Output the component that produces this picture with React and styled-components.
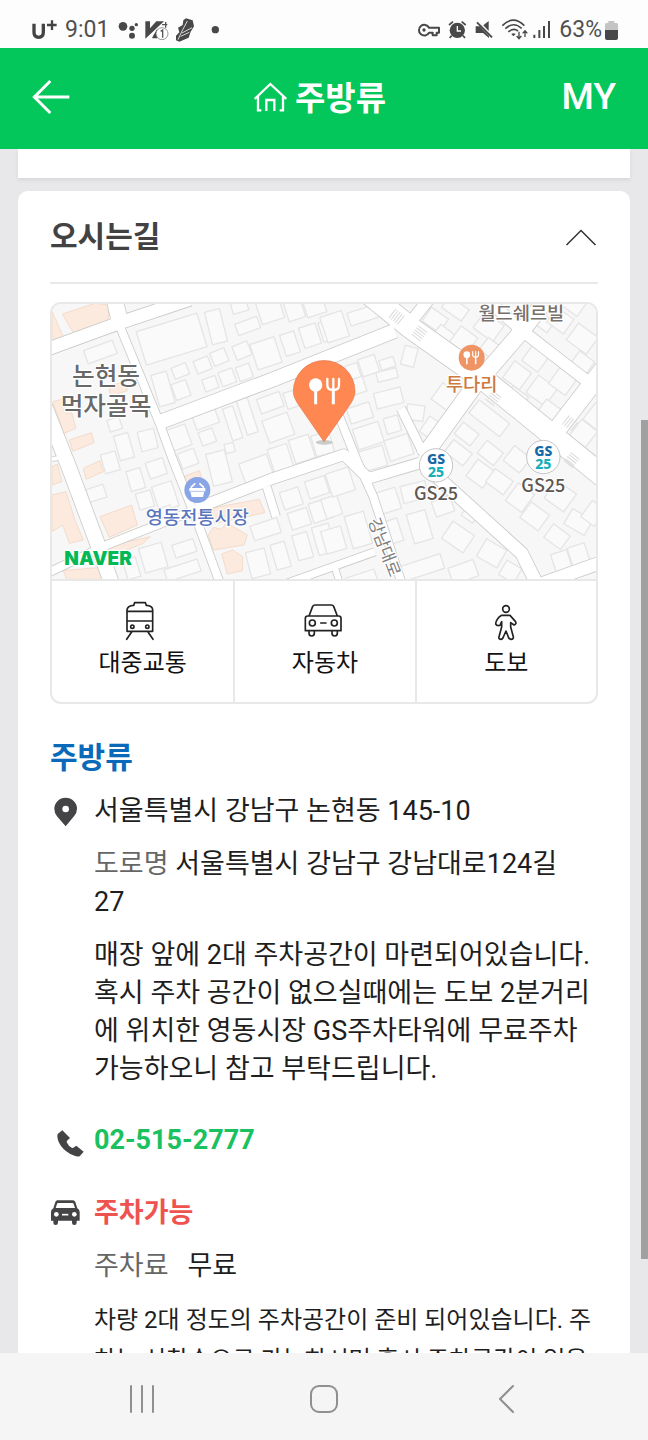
import React from "react";
import styled, { createGlobalStyle } from "styled-components";

const GlobalStyle = createGlobalStyle`
  *, *::before, *::after { box-sizing: border-box; }
  body {
    margin: 0;
    background: #e8e8ea;
    color: #1e1e1e;
    font-family: Roboto, "Noto Sans CJK KR", sans-serif;
  }
  button {
    padding: 0;
    border: 0;
    background: none;
    color: inherit;
    font: inherit;
    cursor: pointer;
  }
  a { color: inherit; text-decoration: none; }
  h1, h2, h3, p, dl, dt, dd { margin: 0; font-size: inherit; font-weight: inherit; }
  svg { display: block; flex: none; }
`;

const Screen = styled.div`
  position: relative;
  display: flex;
  flex-direction: column;
  height: 100vh;
  overflow: hidden;
`;

const StatusBar = styled.div`
  display: flex;
  flex: none;
  align-items: center;
  justify-content: space-between;
  height: 48px;
  padding: 12px 30px 0 32px;
  background: #fdfdfd;
  color: #505050;
  font-size: 23px;
  line-height: 36px;
`;

const StatusGroup = styled.div`
  display: flex;
  align-items: center;
  gap: ${(p) => p.$gap}px;
`;

const TopBar = styled.header`
  display: grid;
  grid-template-columns: 1fr auto 1fr;
  flex: none;
  align-items: center;
  height: 101px;
  padding: 0 32px 4px;
  background: #03c75a;
  color: #fff;
`;

const BackButton = styled.button`
  justify-self: start;
`;

const ShopTitle = styled.h1`
  display: flex;
  align-items: center;
  gap: 8px;
  padding: 4px 8px 0 0;
  font-size: 33px;
  font-weight: 700;
  line-height: 48px;
`;

const MyLink = styled.a`
  justify-self: end;
  font-size: 37px;
  font-weight: 500;
  line-height: 48px;
`;

const Content = styled.main`
  display: flex;
  flex: 1;
  flex-direction: column;
  gap: 13px;
  min-height: 0;
  padding: 0 18px;
  overflow: hidden;
`;

const PreviousCard = styled.div`
  flex: none;
  height: 29px;
  background: #fff;
  box-shadow: 0 2px 4px rgba(0, 0, 0, 0.08);
`;

const Card = styled.section`
  flex: none;
  padding: 0 32px 40px;
  border-radius: 10px 10px 0 0;
  background: #fff;
`;

const CardHeader = styled.button`
  display: flex;
  align-items: center;
  justify-content: space-between;
  width: 100%;
  height: 93px;
  margin-bottom: 18px;
  padding-right: 1px;
  border-bottom: 2px solid #e9e9e9;
  color: #424242;
  font-size: 30px;
  font-weight: 700;
  line-height: 44px;
`;

const MapBox = styled.div`
  overflow: hidden;
  border: 2px solid #e8e8e9;
  border-radius: 11px;
`;

const MapDrawing = styled.svg`
  width: 100%;
  height: auto;
  background: #f7f7f7;
  font-family: Roboto, "Noto Sans CJK KR", sans-serif;
`;

const RouteTabs = styled.div`
  display: grid;
  grid-template-columns: repeat(3, 1fr);
  border-top: 2px solid #e8e8e9;
`;

const RouteTab = styled.button`
  display: flex;
  flex-direction: column;
  align-items: center;
  gap: 4px;
  height: 121px;
  padding-top: 20px;
  color: #111;
  font-size: 24px;
  line-height: 36px;

  & + & { border-left: 2px solid #e8e8e9; }
`;

const ShopName = styled.h3`
  margin: 32px 0 12px;
  color: #0a69b8;
  font-size: 30px;
  font-weight: 700;
  line-height: 44px;
`;

const InfoList = styled.div`
  display: flex;
  flex-direction: column;
  gap: 33px;
`;

const InfoRow = styled.div`
  display: grid;
  grid-template-columns: 44px 1fr;
  padding-right: 5px;
  font-size: 27px;
  line-height: 38px;
`;

const InfoIcon = styled.div`
  display: flex;
  align-items: center;
  justify-content: ${(p) => p.$align || "flex-start"};
  width: 32px;
  height: 40px;
`;

const InfoBody = styled.div`
  display: flex;
  flex-direction: column;
  gap: 15px;
  min-width: 0;
`;

const Muted = styled.span`
  color: #666;
`;

const Fee = styled.p`
  display: flex;
  gap: 19px;
`;

const SmallText = styled.p`
  font-size: 24px;
  line-height: 40px;
`;

const Strong = styled.strong`
  color: ${(p) => p.$color};
  font-weight: 700;
`;

const ScrollThumb = styled.div`
  position: absolute;
  top: 420px;
  right: 0;
  width: 7px;
  height: 839px;
  background: #a0a0a1;
`;

const NavBar = styled.nav`
  display: grid;
  grid-template-columns: repeat(3, 182px);
  flex: none;
  align-items: center;
  justify-content: center;
  justify-items: center;
  height: 87px;
  padding-top: 4px;
  background: #f5f5f5;
`;

const RoundSvg = styled.svg`
  fill: none;
  stroke: ${(p) => p.$color};
  stroke-width: ${(p) => p.$stroke || 2};
  stroke-linecap: round;
  stroke-linejoin: round;
`;

/* ---------- map data ---------- */

const roads = [
  { w: 38, d: "M10 182L240 98L450 28" },
  { w: 48, d: "M222 20L240 98" },
  { w: 24, d: "M238 105L357 395L395 500L470 690L540 880" },
  { w: 42, d: "M357 397L700 268L1065 122" },
  { w: 64, d: "M985 10L1110 112L1340 275L1690 560" },
  { w: 34, d: "M1180 10L1100 112" },
  { w: 48, d: "M1150 500L1300 292L1440 130L1510 40" },
  { w: 34, d: "M1320 10L1450 125L1650 280" },
  { w: 54, d: "M1700 225L1550 420" },
  { w: 24, d: "M890 360L950 510L1000 620L1085 880" },
  { w: 32, d: "M470 655L700 565L912 494L985 565L1130 522L1160 515" },
  { w: 24, d: "M490 650L200 765L20 850" },
  { w: 38, d: "M1140 500L1180 550L1445 790L1490 880" },
  { w: 38, d: "M1480 890L1690 815" },
  { w: 22, d: "M740 880L1005 785" },
  { w: 18, d: "M885 835L900 880" },
  { w: 24, d: "M680 590L708 680" },
  { w: 26, d: "M1083 355L1150 490" },
  { w: 44, d: "M15 350L90 540L172 760L215 880" },
  { w: 12, d: "M36 508L72 500" },
];

const warmLots = [
  "67,72 165,40 208,45 203,92 100,128",
  "36,65 72,145 36,155",
  "38,335 66,328 80,370 95,368 108,415 72,430",
  "88,450 155,428 162,458 98,484",
  "130,535 180,512 190,545 138,568",
  "36,530 52,522 66,575 36,585",
  "36,615 78,605 105,690 130,750 88,760 68,705 36,725",
  "180,680 275,645 292,705 208,742",
  "205,290 252,275 262,302 212,318",
  "430,560 478,542 486,566 440,580",
  "510,655 658,628 675,668 525,700",
  "505,735 520,712 545,718 560,698 622,735 612,765 520,780",
  "545,792 578,780 608,800 608,842 562,852",
  "70,842 205,830 218,868 80,868",
  "200,770 330,740 310,760 210,800",
];

/* Each lot: x, y, width, height, rotation in degrees. */
const lots = [
  [135, 165, 92, 42, -20], [300, 95, 190, 105, -17],
  [505, 60, 46, 100, -14], [575, 35, 48, 32, -16], [588, 90, 70, 36, -20],
  [655, 25, 70, 70, -18], [735, 15, 52, 74, -18], [792, 10, 60, 66, -18],
  [640, 150, 76, 80, -18], [728, 128, 44, 66, -18], [784, 105, 52, 64, -18], [842, 92, 40, 60, -18],
  [465, 205, 46, 40, -22], [515, 180, 46, 42, -22], [582, 160, 48, 44, -22],
  [490, 262, 42, 38, -20], [540, 240, 44, 44, -20], [592, 225, 42, 44, -20],
  [345, 248, 48, 98, -16], [398, 225, 46, 36, -22], [400, 275, 46, 50, -20],
  [385, 410, 62, 66, -20], [460, 358, 72, 52, -20], [480, 420, 44, 42, -20],
  [562, 350, 32, 100, -18], [605, 325, 34, 108, -18], [655, 315, 72, 46, -20], [675, 378, 80, 70, -20], [735, 300, 60, 50, -18],
  [418, 482, 52, 48, -20], [508, 485, 58, 98, -14], [555, 460, 28, 28, -14],
  [605, 505, 88, 68, -20], [692, 468, 60, 76, -18], [755, 440, 62, 74, -18], [820, 430, 56, 64, -16],
  [205, 385, 38, 36, -18], [230, 432, 44, 76, -16], [298, 420, 50, 60, -14],
  [188, 488, 46, 58, -16], [265, 538, 44, 62, -16], [322, 510, 54, 50, -18],
  [142, 590, 54, 40, -18], [292, 605, 46, 50, -16], [345, 580, 62, 78, -18], [330, 655, 68, 38, -20],
  [725, 598, 58, 54, -18], [800, 565, 62, 54, -18], [748, 660, 60, 52, -18], [812, 632, 60, 60, -18],
  [635, 695, 84, 46, -18], [625, 780, 58, 80, -14], [700, 758, 44, 78, -16], [765, 730, 46, 78, -16], [825, 705, 52, 86, -16],
  [305, 765, 70, 76, -16], [375, 822, 105, 38, -18], [400, 755, 66, 40, -18], [255, 805, 40, 60, -16],
  [850, 70, 68, 80, -18], [925, 55, 92, 40, -18], [850, 620, 50, 60, -18], [865, 540, 72, 72, -18],
  [850, 715, 62, 70, -16], [925, 670, 60, 100, -16], [915, 265, 60, 48, -18], [920, 222, 38, 44, -18], [960, 200, 52, 54, -18],
  [925, 345, 70, 48, -18], [945, 405, 80, 64, -18], [960, 475, 76, 62, -16], [1040, 440, 74, 64, -18],
  [1010, 240, 62, 30, -14], [1005, 300, 82, 48, -14], [1020, 205, 44, 30, -18], [1035, 380, 44, 48, -16],
  [1088, 170, 40, 58, 14], [1100, 345, 52, 46, 8], [1150, 385, 42, 56, 34], [1185, 290, 60, 60, 36],
  [1155, 65, 62, 50, 35], [1210, 35, 72, 42, 35], [1185, 115, 54, 40, 38], [1240, 120, 62, 60, 36], [1310, 80, 72, 60, 36], [1325, 155, 58, 46, 38],
  [1400, 225, 62, 62, 36], [1455, 180, 60, 54, 36], [1400, 300, 58, 46, 36], [1470, 270, 70, 64, 36], [1540, 235, 62, 70, 36], [1500, 340, 60, 48, 36],
  [1480, 75, 58, 40, 36], [1530, 65, 62, 54, 36], [1590, 115, 74, 62, 36], [1600, 195, 56, 46, 36], [1570, 20, 60, 46, 36],
  [1290, 360, 116, 50, 38], [1250, 410, 60, 44, 38], [1220, 465, 70, 46, 38], [1320, 465, 62, 48, 38], [1290, 520, 62, 62, 36], [1345, 550, 66, 50, 36],
  [1400, 480, 62, 56, 38], [1410, 590, 60, 66, 36], [1450, 650, 68, 58, 36], [1525, 585, 72, 66, 36], [1580, 670, 70, 52, 30], [1520, 715, 62, 50, 36],
  [1540, 785, 50, 62, -18], [1590, 765, 54, 66, -18], [1635, 640, 50, 60, 36], [1600, 400, 60, 62, 38], [1645, 340, 50, 70, 38],
  [1010, 600, 66, 66, -18], [1085, 580, 76, 52, -14], [1030, 690, 52, 70, -18], [1110, 665, 58, 90, -16], [1180, 625, 58, 48, -20],
  [1215, 710, 78, 62, 34], [1230, 820, 80, 52, -20], [1080, 810, 130, 46, -18], [1320, 760, 70, 60, 30], [1270, 655, 42, 36, 36], [1385, 820, 52, 50, 30],
  [920, 850, 90, 40, -18],
];

const crossings = [
  [1070, 80, 38], [1138, 130, -52], [1360, 325, -52], [1590, 400, 38], [1595, 510, -52],
];

const labelStroke = { stroke: "#fff", strokeWidth: 7, strokeLinejoin: "round", paintOrder: "stroke" };

function Crossing({ x, y, angle }) {
  return (
    <g transform={`translate(${x} ${y}) rotate(${angle})`} stroke="#dadada" strokeWidth="3">
      {[-16, -8, 0, 8, 16].map((offset) => (
        <path key={offset} d={`M${offset} -17V17`} />
      ))}
    </g>
  );
}

function Cutlery({ color = "#fff" }) {
  return (
    <g fill="none" stroke={color} strokeLinecap="round">
      <circle cx="-25" cy="-20" r="20" fill={color} stroke="none" />
      <path d="M-25 -8V38" strokeWidth="9" strokeLinecap="butt" />
      <path d="M10 -38V-20Q10 -5 28 -5Q45 -5 45 -20V-38M28 -38V-5" strokeWidth="7" />
      <path d="M28 -8V38" strokeWidth="9" strokeLinecap="butt" />
    </g>
  );
}

function StoreMark({ x, y }) {
  return (
    <g>
      <circle cx={x} cy={y} r="50" fill="#fff" stroke="#a9a9ae" strokeWidth="2" />
      <text x={x} y={y - 3} fontFamily="'Noto Sans', sans-serif" fontSize="42" fontWeight="800" textAnchor="middle">
        <tspan fill="#1769a6">GS</tspan>
        <tspan x={x} dy="38" fill="#18aebb">25</tspan>
      </text>
      <text x={x} y={y + 104} fill="#5d5651" fontSize="54" fontWeight="500" fontFamily="'Noto Sans CJK KR'" textAnchor="middle" {...labelStroke}>
        GS25
      </text>
    </g>
  );
}

function DirectionsMap() {
  return (
    <MapDrawing viewBox="36 42 1632 825" role="img" aria-label="주방류 위치 지도">
      <g fill="#fafafa" stroke="#e5e5e6" strokeWidth="4" strokeLinejoin="round">
        {lots.map(([x, y, w, h, angle], i) => (
          <rect key={i} x={x} y={y} width={w} height={h} transform={`rotate(${angle} ${x + w / 2} ${y + h / 2})`} />
        ))}
      </g>
      <g fill="#fbeadd" stroke="#f3dccb" strokeWidth="3">
        {warmLots.map((points) => (
          <polygon key={points} points={points} />
        ))}
      </g>
      <g fill="none" stroke="#cbcbc9" strokeLinejoin="round">
        {roads.map((road) => (
          <path key={road.d} d={road.d} strokeWidth={road.w + 5} />
        ))}
      </g>
      <g fill="none" stroke="#fff" strokeLinejoin="round">
        {roads.map((road) => (
          <path key={road.d} d={road.d} strokeWidth={road.w} />
        ))}
      </g>
      {crossings.map(([x, y, angle]) => (
        <Crossing key={x} x={x} y={y} angle={angle} />
      ))}

      <g fill="#686868" fontSize="74" fontWeight="500" textAnchor="middle" {...labelStroke}>
        <text x="198" y="285">논현동</text>
        <text x="198" y="374">먹자골목</text>
      </g>
      <text x="1444" y="90" fill="#77706b" fontSize="56" fontWeight="500" textAnchor="middle" {...labelStroke}>
        월드쉐르빌
      </text>

      <circle cx="1295" cy="203" r="39" fill="#ee9465" />
      <g transform="translate(1293 204) scale(.5)"><Cutlery /></g>
      <text x="1295" y="303" fill="#cd7a3c" fontSize="56" fontWeight="500" textAnchor="middle" {...labelStroke}>
        투다리
      </text>

      <circle cx="472" cy="600" r="39" fill="#89a5e6" />
      <g fill="#fff">
        <path d="M448 594H496V604H493L489 621H455L451 604H448Z" />
        <path d="M452 593L466 580M492 593L478 580" fill="none" stroke="#fff" strokeWidth="5" />
        <path d="M452 604H492" stroke="#89a5e6" strokeWidth="2" />
      </g>
      <text x="472" y="701" fill="#5b76bd" fontSize="56" fontWeight="500" textAnchor="middle" {...labelStroke}>
        영동전통시장
      </text>

      <StoreMark x={1188} y={526} />
      <StoreMark x={1510} y={501} />

      <text
        transform="translate(984 692) rotate(69)"
        fill="#7c7c7c"
        fontSize="50"
        textAnchor="start"
        {...labelStroke}
      >
        강남대로
      </text>

      <ellipse cx="853" cy="457" rx="26" ry="7" fill="#c9cdc9" />
      <path
        d="M852 455L783 355C768 334 760 320 760 304A92 92 0 0 1 945 304C945 320 936 336 923 354Z"
        fill="#ff8751"
        stroke="#e2764a"
        strokeWidth="2"
      />
      <g transform="translate(852 305)"><Cutlery /></g>

      <text x="73" y="825" fill="#03b955" fontFamily="Inter, sans-serif" fontSize="57" fontWeight="900" {...labelStroke}>
        NAVER
      </text>
    </MapDrawing>
  );
}

/* ---------- status bar icons ---------- */

function NotificationIcons() {
  return (
    <svg width="104" height="26" viewBox="353 50 312 78" fill="#484848" aria-hidden="true">
      <circle cx="371" cy="78" r="13" />
      <circle cx="398" cy="84" r="8" />
      <circle cx="411" cy="73" r="5" />
      <circle cx="398" cy="106" r="9" />
      <path d="M438 63H452V84L471 63H494L438 115Z" />
      <path d="M459 111L474 85V114H459Z" />
      <circle cx="488" cy="100" r="18" fill="#fff" stroke="#666" strokeWidth="2" />
      <path d="M484 93L490 89V112M488 73H504M499 65V82" fill="none" stroke="#555" strokeWidth="4" />
      <path d="M560 54L580 60L584 78L574 94L568 112L540 124L530 120V106L540 96L536 82L550 74L552 60Z" />
      <path d="M564 62L548 92L536 118M578 82L548 98M570 96L544 108" fill="none" stroke="#d8d8d8" strokeWidth="3" />
      <circle cx="648" cy="88" r="11" />
    </svg>
  );
}

function SystemIcons() {
  return (
    <svg width="134" height="26" viewBox="278 50 402 78" fill="#484848" aria-hidden="true">
      <path
        d="M314 82A16 16 0 1 0 314 97H325V105H337V97H344V82Z"
        fill="none"
        stroke="#484848"
        strokeWidth="6"
        strokeLinejoin="round"
      />
      <circle cx="299" cy="89" r="5" />
      <circle cx="399" cy="90" r="23" />
      <path d="M374 74L386 64M424 74L412 64M382 106L376 113M416 106L422 113" stroke="#484848" strokeWidth="5" fill="none" />
      <path d="M399 77V92H410" stroke="#fff" strokeWidth="4" fill="none" />
      <path d="M454 78H466L494 107V113L476 98H454Z" />
      <path d="M477 75L493 62V92Z" />
      <path d="M458 66L503 111" stroke="#484848" strokeWidth="6" />
      <g fill="none" stroke="#484848" strokeWidth="5">
        <path d="M534 76Q567 43 600 76" />
        <path d="M543 85Q567 62 592 84" />
        <path d="M552 95Q567 81 581 92" />
      </g>
      <path d="M561 101L567 108L574 101Q567 96 561 101Z" />
      <path d="M584 94V113M577 107L584 115L591 107M602 110V93M595 99L602 91L609 99" stroke="#484848" strokeWidth="4" fill="none" />
      <path d="M630 103V113M645 89V113M659 77V113M674 62V113" stroke="#484848" strokeWidth="6" fill="none" />
    </svg>
  );
}

function Battery() {
  return (
    <svg width="13" height="19" viewBox="0 0 39 57" aria-hidden="true">
      <path d="M10 0H28V6H35Q39 6 39 11V28H0V11Q0 6 4 6H10Z" fill="#c4c4c4" />
      <path d="M0 27H39V51Q39 57 33 57H6Q0 57 0 51Z" fill="#484848" />
    </svg>
  );
}

/* ---------- page icons ---------- */

const BackIcon = () => (
  <svg width="38" height="36" viewBox="0 0 114 108" fill="none" stroke="#fff" strokeWidth="9" aria-hidden="true">
    <path d="M55 6L7 54L55 102M7 54H112" />
  </svg>
);

const HomeIcon = () => (
  <svg width="33" height="34" viewBox="0 0 99 102" fill="none" stroke="#fff" strokeWidth="7" aria-hidden="true">
    <path d="M2 51L49 6L97 51M12 43V85H22M87 43V85H77M37 87V54H61V87" />
  </svg>
);

const ChevronUp = () => (
  <svg width="32" height="18" viewBox="0 0 64 36" fill="none" stroke="#333" strokeWidth="3" aria-hidden="true">
    <path d="M3 34L32 5L61 34" />
  </svg>
);

const TrainIcon = () => (
  <RoundSvg width="40" height="40" viewBox="96 34 120 120" $color="#222" $stroke={5} aria-hidden="true">
    <path d="M108 125V60Q110 48 128 47L131 39H163L166 47Q184 48 185 60V125ZM108 65H185M108 94H185M122 127L107 149M171 127L186 149" />
    <circle cx="124" cy="111" r="5" />
    <circle cx="169" cy="111" r="5" />
  </RoundSvg>
);

const CarIcon = () => (
  <RoundSvg width="40" height="40" viewBox="640 34 120 120" overflow="visible" $color="#222" $stroke={5} aria-hidden="true">
    <path d="M652 79L663 50Q665 46 670 46H719Q724 46 726 50L737 79M648 79H741Q748 79 748 86V123H641V86Q641 79 648 79M652 124V131Q652 139 660 139Q668 139 668 131V124M721 124V131Q721 139 729 139Q737 139 737 131V124M687 100H703" />
    <circle cx="662" cy="100" r="9" />
    <circle cx="728" cy="100" r="9" />
  </RoundSvg>
);

const WalkIcon = () => (
  <RoundSvg width="40" height="40" viewBox="143 34 120 120" $color="#222" $stroke={5} aria-hidden="true">
    <circle cx="203" cy="58" r="10" />
    <path d="M190 77H215L231 95Q236 103 227 106L217 99V112L225 141Q226 149 218 149Q211 148 210 142L203 124L195 142Q193 149 187 149Q180 148 182 141L190 112V96L185 107Q176 110 172 103Q174 86 190 77Z" />
  </RoundSvg>
);

const PinIcon = () => (
  <svg width="24" height="30" viewBox="42 54 72 90" aria-hidden="true">
    <path d="M77 142L51 112Q43 102 43 89A34 33 0 0 1 111 89Q111 102 102 112ZM77 80A10 10 0 1 0 77 100A10 10 0 1 0 77 80Z" fill="#444446" fillRule="evenodd" />
  </svg>
);

const PhoneIcon = () => (
  <svg width="27" height="31" viewBox="44 75 81 93" overflow="visible" aria-hidden="true">
    <path d="M53 98L66 88L89 111L80 119Q78 121 80 125Q84 134 94 140Q98 142 101 139L108 134L130 152L118 166Q110 168 99 163Q76 154 62 135Q51 119 51 105Q51 100 53 98Z" fill="#444446" />
  </svg>
);

const ParkingIcon = () => (
  <svg width="30" height="27" viewBox="32 293 90 81" overflow="visible" aria-hidden="true">
    <path
      d="M54 291H101Q106 291 108 296L114 315Q121 318 121 326V352H112V358Q112 365 105 365Q98 365 98 358V352H56V358Q56 365 49 365Q42 365 42 358V352H35V326Q35 318 42 315L48 296Q50 291 54 291ZM56 299Q54 299 53 302L49 314H107L103 302Q102 299 99 299Z"
      fill="#444446"
      fillRule="evenodd"
    />
    <circle cx="51" cy="333" r="7" fill="#fff" />
    <circle cx="105" cy="333" r="7" fill="#fff" />
    <path d="M68 334H87" stroke="#fff" strokeWidth="5" />
  </svg>
);

const routes = [
  { label: "대중교통", Icon: TrainIcon },
  { label: "자동차", Icon: CarIcon },
  { label: "도보", Icon: WalkIcon },
];

export default function App() {
  return (
    <>
      <GlobalStyle />
      <Screen>
        <StatusBar>
          <StatusGroup $gap={8}>
            <svg width="25" height="22" viewBox="96 54 75 66" fill="none" stroke="#444" strokeWidth="8" role="img" aria-label="U+">
              <path d="M102 68V94Q102 109 116 109Q130 109 130 94V68" strokeWidth="10" />
              <path d="M141 72H170M156 58V87" strokeWidth="7" />
            </svg>
            <span>9:01</span>
            <NotificationIcons />
          </StatusGroup>
          <StatusGroup $gap={8}>
            <SystemIcons />
            <StatusGroup $gap={3}>
              <span>63%</span>
              <Battery />
            </StatusGroup>
          </StatusGroup>
        </StatusBar>

        <TopBar>
          <BackButton type="button" aria-label="뒤로"><BackIcon /></BackButton>
          <ShopTitle><HomeIcon />주방류</ShopTitle>
          <MyLink href="#my">MY</MyLink>
        </TopBar>

        <Content>
          <PreviousCard />
          <Card>
            <h2>
              <CardHeader type="button" aria-expanded="true">
                오시는길
                <ChevronUp />
              </CardHeader>
            </h2>

            <MapBox>
              <DirectionsMap />
              <RouteTabs>
                {routes.map(({ label, Icon }) => (
                  <RouteTab key={label} type="button">
                    <Icon />
                    {label}
                  </RouteTab>
                ))}
              </RouteTabs>
            </MapBox>

            <ShopName>주방류</ShopName>
            <InfoList>
              <InfoRow>
                <InfoIcon $align="center"><PinIcon /></InfoIcon>
                <InfoBody>
                  <p>서울특별시 강남구 논현동 145-10</p>
                  <p><Muted>도로명</Muted> 서울특별시 강남구 강남대로124길 27</p>
                  <p>
                    매장 앞에 2대 주차공간이 마련되어있습니다. 혹시 주차 공간이 없으실때에는 도보 2분거리에 위치한
                    영동시장 GS주차타워에 무료주차 가능하오니 참고 부탁드립니다.
                  </p>
                </InfoBody>
              </InfoRow>
              <InfoRow>
                <InfoIcon $align="flex-end"><PhoneIcon /></InfoIcon>
                <InfoBody>
                  <a href="tel:02-515-2777"><Strong $color="#19c15f">02-515-2777</Strong></a>
                </InfoBody>
              </InfoRow>
              <InfoRow>
                <InfoIcon><ParkingIcon /></InfoIcon>
                <InfoBody>
                  <p><Strong $color="#ef5350">주차가능</Strong></p>
                  <Fee><Muted>주차료</Muted><span>무료</span></Fee>
                  <SmallText>
                    차량 2대 정도의 주차공간이 준비 되어있습니다. 주차는 선착순으로 가능하시며 혹시 주차공간이 없을
                  </SmallText>
                </InfoBody>
              </InfoRow>
            </InfoList>
          </Card>
        </Content>

        <NavBar>
          <button type="button" aria-label="최근 앱">
            <RoundSvg width="28" height="30" viewBox="0 0 28 30" $color="#8f8f8f" aria-hidden="true">
              <path d="M3 2V28M14 2V28M25 2V28" />
            </RoundSvg>
          </button>
          <button type="button" aria-label="홈">
            <RoundSvg width="30" height="30" viewBox="0 0 30 30" $color="#8f8f8f" aria-hidden="true">
              <rect x="2" y="2" width="26" height="26" rx="8" />
            </RoundSvg>
          </button>
          <button type="button" aria-label="이전">
            <RoundSvg width="18" height="30" viewBox="0 0 18 30" $color="#8f8f8f" aria-hidden="true">
              <path d="M16 2L3 15L16 28" />
            </RoundSvg>
          </button>
        </NavBar>
        <ScrollThumb />
      </Screen>
    </>
  );
}
